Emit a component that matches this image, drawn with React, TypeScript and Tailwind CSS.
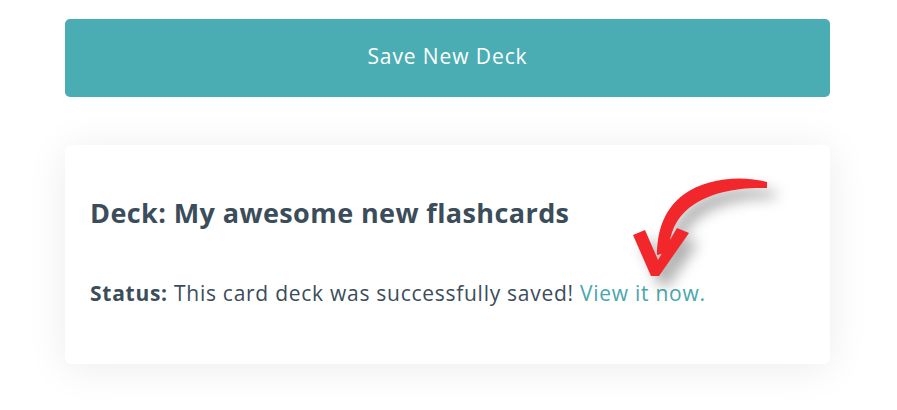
import React from "react";

export default function App() {
  return (
    <div className="w-[897px] h-[410px] bg-white overflow-hidden" style={{ fontFamily: "'Open Sans', Lato, sans-serif" }}>
      <div className="ml-[65px] w-[765px] pt-[19px]">
        <button className="w-full h-[78px] rounded-[5px] bg-[#4aadb3] text-white text-[21px] tracking-[0.9px] pb-[3px] flex items-center justify-center">
          Save New Deck
        </button>
        <div className="relative mt-[48px] h-[219px] rounded-[6px] bg-white shadow-[0_4px_40px_rgba(0,0,0,0.08)] px-[25px] pt-[53px]">
          <h2 className="text-[27px] leading-[30px] tracking-[0.4px] font-bold text-[#3b4d5a]">Deck: My awesome new flashcards</h2>
          <p className="mt-[52px] text-[21px] leading-[26px] tracking-[0.73px] text-[#3b4d5a]">
            <span className="font-bold">Status:</span> This card deck was successfully saved!{" "}
            <span className="text-[#4aa6ad]">View it now.</span>
          </p>
          <svg
            className="absolute left-[556px] top-[25px] w-[160px] h-[120px] overflow-visible"
            viewBox="0 0 160 120"
            style={{ filter: "drop-shadow(9px 10px 7px rgba(0,0,0,0.32))" }}
          >
            <path
              d="M146,12 C120,5 85,8 62,25 C45,38 36,58 36,85 L48,82 C48,62 56,48 68,38 C88,22 118,17 146,18 Z"
              fill="#f1272c"
            />
            <path d="M12,65 L24,60 L37,90 L56,58 L68,63 L38,106 L30,106 Z" fill="#f1272c" />
          </svg>
        </div>
      </div>
    </div>
  );
}
